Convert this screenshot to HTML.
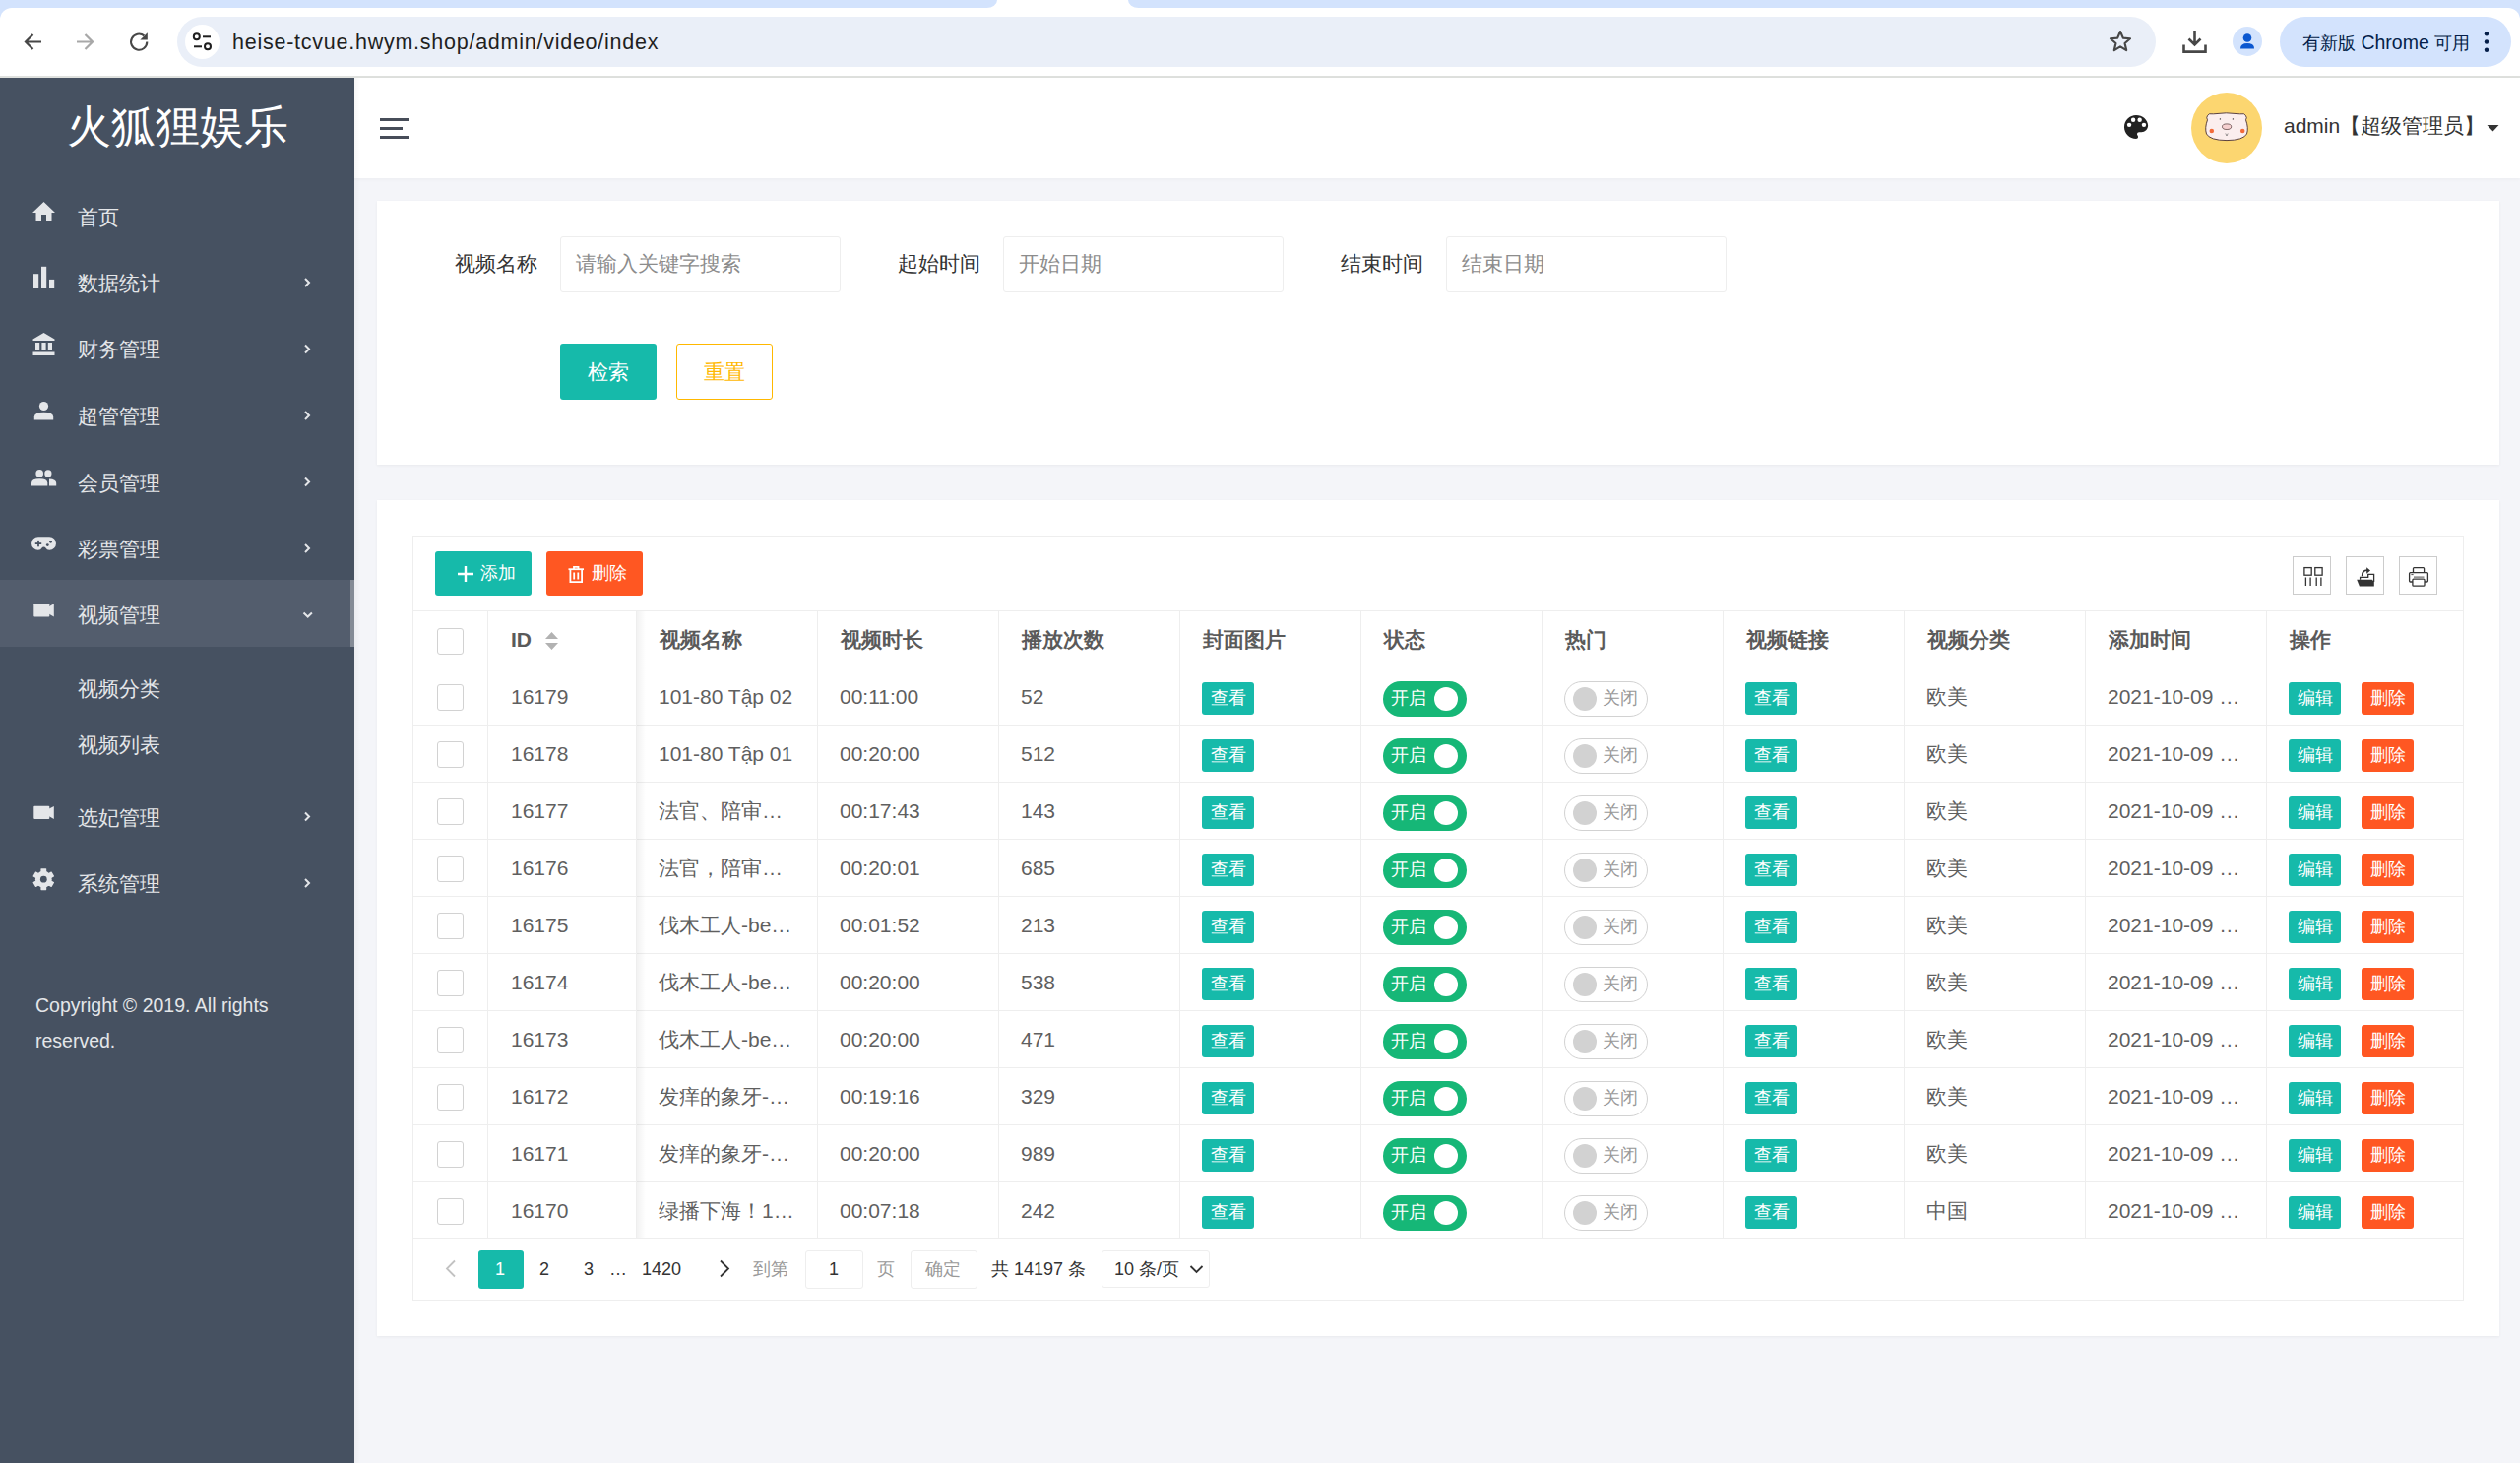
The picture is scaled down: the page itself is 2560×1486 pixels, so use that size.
<!DOCTYPE html>
<html><head><meta charset="utf-8"><title>video</title>
<style>
html,body{margin:0;padding:0;}
body{width:2560px;height:1486px;position:relative;overflow:hidden;background:#f4f5f9;font-family:"Liberation Sans",sans-serif;}
.t{position:absolute;white-space:nowrap;}
svg{position:absolute;overflow:visible;}
</style></head><body>

<div style="position:absolute;left:0px;top:0px;width:2560px;height:8px;background:#ffffff"></div>
<div style="position:absolute;left:0px;top:0px;width:1013px;height:8px;background:#d3e3fd;border-bottom-right-radius:12px 9px"></div>
<div style="position:absolute;left:1146px;top:0px;width:1414px;height:8px;background:#d3e3fd;border-bottom-left-radius:12px 9px"></div>
<div style="position:absolute;left:0px;top:8px;width:14px;height:14px;background:#d3e3fd"></div>
<div style="position:absolute;left:2546px;top:8px;width:14px;height:14px;background:#d3e3fd"></div>
<div style="position:absolute;left:0px;top:8px;width:2560px;height:69px;background:#ffffff;border-top-left-radius:12px;border-top-right-radius:12px"></div>
<div style="position:absolute;left:0px;top:77px;width:2560px;height:2px;background:#dfe1de"></div>
<svg style="left:0;top:0" width="2560" height="79">
<g fill="none" stroke-linecap="butt" stroke-linejoin="miter">
<path d="M42 42.5 H26 M33.5 35 L26 42.5 L33.5 50" stroke="#474747" stroke-width="2.2"/>
<path d="M78 42.5 H94 M86.5 35 L94 42.5 L86.5 50" stroke="#a8a8a8" stroke-width="2.2"/>
<path d="M149.3 42.6 A8.1 8.1 0 1 1 146.4 36.4" stroke="#474747" stroke-width="2.1"/>
<path d="M149.8 33.2 V40.6 H142.4 Z" fill="#474747" stroke="none"/>
</g>
</svg>
<div style="position:absolute;left:180px;top:17px;width:2010px;height:51px;background:#eaeff8;border-radius:26px"></div>
<div style="position:absolute;left:188px;top:25px;width:35px;height:35px;background:#ffffff;border-radius:50%"></div>
<svg style="left:0;top:0" width="300" height="79"><g fill="none" stroke="#1f1f1f" stroke-width="2">
<circle cx="199.8" cy="37.3" r="3"/><path d="M206 37.3 H214"/>
<path d="M197 47.3 H205"/><circle cx="211" cy="47.3" r="3"/></g></svg>
<div class="t" style="left:236px;top:30px;font-size:21.5px;line-height:26px;color:#1f1f1f;letter-spacing:0.75px">heise-tcvue.hwym.shop/admin/video/index</div>
<svg style="left:2140px;top:29px" width="28" height="26" viewBox="0 0 24 24"><path d="M12 2.8l2.6 6.1 6.6.6-5 4.4 1.5 6.5L12 17l-5.7 3.4 1.5-6.5-5-4.4 6.6-.6z" fill="none" stroke="#474747" stroke-width="2" stroke-linejoin="round"/></svg>
<svg style="left:2217px;top:30px" width="25" height="25" viewBox="0 0 25 25"><g fill="none" stroke="#474747" stroke-width="2.6"><path d="M12.5 1 V15 M6.5 9.5 L12.5 15.5 L18.5 9.5"/><path d="M1.5 15.5 V22.6 H23.5 V15.5"/></g></svg>
<div style="position:absolute;left:2268px;top:27px;width:30px;height:30px;background:#d3e3fd;border-radius:50%"></div>
<svg style="left:2268px;top:27px" width="30" height="30"><circle cx="15" cy="11.5" r="4.3" fill="#0b57d0"/><path d="M8 22.5 Q8 17 15 17 Q22 17 22 22.5 Z" fill="#0b57d0"/></svg>
<div style="position:absolute;left:2316px;top:17px;width:235px;height:51px;background:#d3e3fd;border-radius:26px"></div>
<div class="t" style="left:2339px;top:31px;font-size:19.5px;line-height:24px;color:#041e49;"><span style="font-size:18px">有新版</span> Chrome <span style="font-size:18px">可用</span></div>
<svg style="left:2520px;top:28px" width="12" height="28"><circle cx="6" cy="6.3" r="2.2" fill="#041e49"/><circle cx="6" cy="14.5" r="2.2" fill="#041e49"/><circle cx="6" cy="22.8" r="2.2" fill="#041e49"/></svg>
<div style="position:absolute;left:0px;top:79px;width:360px;height:1407px;background:#465161"></div>
<div class="t" style="left:0px;top:103px;font-size:45px;line-height:52px;color:#ffffff;"><div style="width:360px;text-align:center">火狐狸娱乐</div></div>
<div class="t" style="left:79px;top:208px;font-size:21px;line-height:26px;color:#e4e6e9;">首页</div>
<div class="t" style="left:79px;top:275px;font-size:21px;line-height:26px;color:#e4e6e9;">数据统计</div>
<svg style="left:0;top:0" width="360" height="1486"><path d="M310 283.0 L314 287.0 L310 291.0" fill="none" stroke="#e4e6e9" stroke-width="2"/></svg>
<div class="t" style="left:79px;top:342px;font-size:21px;line-height:26px;color:#e4e6e9;">财务管理</div>
<svg style="left:0;top:0" width="360" height="1486"><path d="M310 350.5 L314 354.5 L310 358.5" fill="none" stroke="#e4e6e9" stroke-width="2"/></svg>
<div class="t" style="left:79px;top:410px;font-size:21px;line-height:26px;color:#e4e6e9;">超管管理</div>
<svg style="left:0;top:0" width="360" height="1486"><path d="M310 418.0 L314 422.0 L310 426.0" fill="none" stroke="#e4e6e9" stroke-width="2"/></svg>
<div class="t" style="left:79px;top:478px;font-size:21px;line-height:26px;color:#e4e6e9;">会员管理</div>
<svg style="left:0;top:0" width="360" height="1486"><path d="M310 485.5 L314 489.5 L310 493.5" fill="none" stroke="#e4e6e9" stroke-width="2"/></svg>
<div class="t" style="left:79px;top:545px;font-size:21px;line-height:26px;color:#e4e6e9;">彩票管理</div>
<svg style="left:0;top:0" width="360" height="1486"><path d="M310 553.0 L314 557.0 L310 561.0" fill="none" stroke="#e4e6e9" stroke-width="2"/></svg>
<div style="position:absolute;left:0px;top:589px;width:360px;height:68px;background:#535d6d"></div>
<div style="position:absolute;left:356px;top:589px;width:4px;height:68px;background:#848b96"></div>
<div class="t" style="left:79px;top:612px;font-size:21px;line-height:26px;color:#e4e6e9;">视频管理</div>
<svg style="left:0;top:0" width="360" height="1486"><path d="M308.5 622.5 L312.7 626.5 L316.9 622.5" fill="none" stroke="#e4e6e9" stroke-width="2"/></svg>
<svg style="left:0;top:0" width="360" height="1486"><g fill="#e4e6e9"><path d="M44.5 205 L33 216 H36.5 V224 H42 V218 H47 V224 H52.5 V216 H56 Z"/><rect x="34" y="278.2" width="5.2" height="14.8"/><rect x="42" y="270.8" width="5.2" height="22.2"/><rect x="50" y="283.9" width="5.2" height="9.1"/><path d="M44.5 338 L33.5 344.5 V346 H55.5 V344.5 Z"/><rect x="36" y="348" width="4.2" height="8"/><rect x="42.4" y="348" width="4.2" height="8"/><rect x="48.8" y="348" width="4.2" height="8"/><rect x="33.5" y="357.5" width="22" height="3.5"/><circle cx="44.5" cy="412.5" r="4.6"/><path d="M34.8 426.5 V423.5 Q34.8 418.8 44.5 418.8 Q54.2 418.8 54.2 423.5 V426.5 Z"/><circle cx="40.2" cy="480.9" r="3.8"/><circle cx="48.9" cy="480.9" r="3.6"/><path d="M32 493.5 V490.6 Q32 486.3 40.2 486.3 Q48.3 486.3 48.3 490.6 V493.5 Z"/><path d="M50 493.5 V486.5 Q57.2 486.7 57.2 490.8 V493.5 Z"/><path d="M38.8 545.2 H50.2 A6.8 6.8 0 0 1 50.2 558.8 Q47.6 558.8 46.4 556.6 Q45.8 555.6 44.5 555.6 Q43.2 555.6 42.6 556.6 Q41.4 558.8 38.8 558.8 A6.8 6.8 0 0 1 38.8 545.2 Z"/><rect x="34.3" y="613.2" width="16" height="13.4" rx="1"/><path d="M50 616 L54.8 613.3 V626.5 L50 623.8 Z"/></g><g fill="#465161"><circle cx="39.5" cy="551.5" r="2.6" fill="none"/></g></svg>
<svg style="left:0;top:0" width="360" height="1486"><g fill="#465161">
<rect x="35.8" y="551.2" width="6.4" height="1.8"/><rect x="38.1" y="548.9" width="1.8" height="6.4"/>
<circle cx="51.6" cy="550.3" r="1.4"/><circle cx="48.3" cy="553.6" r="1.4"/></g></svg>
<div class="t" style="left:79px;top:687px;font-size:21px;line-height:26px;color:#e4e6e9;">视频分类</div>
<div class="t" style="left:79px;top:744px;font-size:21px;line-height:26px;color:#e4e6e9;">视频列表</div>
<div class="t" style="left:79px;top:818px;font-size:21px;line-height:26px;color:#e4e6e9;">选妃管理</div>
<svg style="left:0;top:0" width="360" height="1486"><path d="M310 825.5 L314 829.5 L310 833.5" fill="none" stroke="#e4e6e9" stroke-width="2"/></svg>
<div class="t" style="left:79px;top:885px;font-size:21px;line-height:26px;color:#e4e6e9;">系统管理</div>
<svg style="left:0;top:0" width="360" height="1486"><path d="M310 893.0 L314 897.0 L310 901.0" fill="none" stroke="#e4e6e9" stroke-width="2"/></svg>
<svg style="left:0;top:0" width="360" height="1486"><g fill="#e4e6e9">
<rect x="34.3" y="818.7" width="16" height="13.4" rx="1"/><path d="M50 821.5 L54.8 818.9 V831.9 L50 829.3 Z"/>
</g>
<g transform="translate(44.3 893.2)" fill="#e4e6e9"><circle cx="0" cy="0" r="8.4"/>
<rect x="-2.9" y="-11" width="5.8" height="22" rx="0.6"/><rect x="-2.9" y="-11" width="5.8" height="22" rx="0.6" transform="rotate(60)"/><rect x="-2.9" y="-11" width="5.8" height="22" rx="0.6" transform="rotate(120)"/>
<circle cx="0" cy="0" r="3.4" fill="#465161"/></g>
</svg>
<div class="t" style="left:36px;top:1003px;font-size:19.5px;line-height:36px;color:#e4e6e9;">Copyright © 2019. All rights<br>reserved.</div>
<div style="position:absolute;left:360px;top:79px;width:2200px;height:102px;background:#ffffff;box-shadow:0 1px 4px rgba(0,0,0,0.04)"></div>
<div style="position:absolute;left:386px;top:120px;width:30px;height:3px;background:#474d59"></div>
<div style="position:absolute;left:386px;top:129px;width:23px;height:3px;background:#474d59"></div>
<div style="position:absolute;left:386px;top:138px;width:30px;height:3px;background:#474d59"></div>
<svg style="left:2158px;top:117px" width="24" height="24" viewBox="2.5 2.5 19 19"><path fill="#222" d="M12 2.5C6.8 2.5 2.5 6.8 2.5 12s4.3 9.5 9.5 9.5c.9 0 1.6-.7 1.6-1.6 0-.4-.2-.8-.4-1.1-.3-.3-.4-.7-.4-1.1 0-.9.7-1.6 1.6-1.6h1.9c2.9 0 5.3-2.4 5.3-5.3C21.5 6.3 17.2 2.5 12 2.5z"/><g fill="#fff"><circle cx="9.7" cy="6.2" r="1.75"/><circle cx="14.9" cy="6.2" r="1.75"/><circle cx="6.5" cy="10.3" r="1.75"/><circle cx="18.3" cy="10.3" r="1.75"/></g></svg>
<div style="position:absolute;left:2226px;top:94px;width:72px;height:72px;background:#fcd670;border-radius:50%"></div>
<svg style="left:2226px;top:94px" width="72" height="72"><path d="M16.5 23.5 Q17.5 20.8 22.5 21.8 Q35 19.8 49.5 21.8 Q54.5 20.8 55.5 23.5 Q57 25.8 55.5 27.8 Q58.5 36 56.5 42 Q53 48.5 36 48.6 Q19 48.5 15.5 42 Q13.5 36 16.5 27.8 Q15 25.8 16.5 23.5 Z" fill="#fbeeee" stroke="#4a3030" stroke-width="0.9"/>
<ellipse cx="36.1" cy="34.7" rx="4.6" ry="2.8" fill="#f6d0d0" stroke="#4a3030" stroke-width="0.7"/>
<circle cx="20.8" cy="39" r="2.3" fill="#f26b3a"/><circle cx="52.2" cy="39" r="2.3" fill="#f26b3a"/>
<circle cx="29.4" cy="26.9" r="0.7" fill="#333"/><circle cx="42.4" cy="26.9" r="0.7" fill="#333"/>
<path d="M34.8 41.5 L36 44 L37.2 41.5" fill="none" stroke="#555" stroke-width="0.6"/></svg>
<div class="t" style="left:2320px;top:115px;font-size:21px;line-height:26px;color:#333333;">admin【超级管理员】</div>
<svg style="left:2526px;top:126px" width="14" height="8"><path d="M0.5 1 H12.5 L6.5 7.5 Z" fill="#333"/></svg>
<div style="position:absolute;left:360px;top:79px;width:6px;height:1407px;background:linear-gradient(to right, rgba(0,0,0,0.035), rgba(0,0,0,0))"></div>
<div style="position:absolute;left:383px;top:204px;width:2156px;height:268px;background:#ffffff;box-shadow:0 1px 3px rgba(0,0,0,0.05)"></div>
<div class="t" style="left:462px;top:255px;font-size:21px;line-height:26px;color:#333333;">视频名称</div>
<div style="position:absolute;left:569px;top:240px;width:283px;height:55px;background:#fff;border:1px solid #eeeeee;border-radius:3px"></div>
<div class="t" style="left:585px;top:255px;font-size:21px;line-height:26px;color:#8c8c8c;">请输入关键字搜索</div>
<div class="t" style="left:912px;top:255px;font-size:21px;line-height:26px;color:#333333;">起始时间</div>
<div style="position:absolute;left:1019px;top:240px;width:283px;height:55px;background:#fff;border:1px solid #eeeeee;border-radius:3px"></div>
<div class="t" style="left:1035px;top:255px;font-size:21px;line-height:26px;color:#8c8c8c;">开始日期</div>
<div class="t" style="left:1362px;top:255px;font-size:21px;line-height:26px;color:#333333;">结束时间</div>
<div style="position:absolute;left:1469px;top:240px;width:283px;height:55px;background:#fff;border:1px solid #eeeeee;border-radius:3px"></div>
<div class="t" style="left:1485px;top:255px;font-size:21px;line-height:26px;color:#8c8c8c;">结束日期</div>
<div style="position:absolute;left:569px;top:349px;width:98px;height:57px;background:#16baaa;border-radius:3px"></div>
<div class="t" style="left:597px;top:365px;font-size:21px;line-height:26px;color:#ffffff;">检索</div>
<div style="position:absolute;left:687px;top:349px;width:96px;height:55px;background:#fff;border:1px solid #ffb800;border-radius:3px"></div>
<div class="t" style="left:715px;top:365px;font-size:21px;line-height:26px;color:#ffb800;">重置</div>
<div style="position:absolute;left:383px;top:508px;width:2156px;height:849px;background:#ffffff;box-shadow:0 1px 3px rgba(0,0,0,0.05)"></div>
<div style="position:absolute;left:419px;top:544px;width:1px;height:777px;background:#eeeeee"></div>
<div style="position:absolute;left:2502px;top:544px;width:1px;height:777px;background:#eeeeee"></div>
<div style="position:absolute;left:419px;top:544px;width:2084px;height:1px;background:#eeeeee"></div>
<div style="position:absolute;left:419px;top:620px;width:2084px;height:1px;background:#eeeeee"></div>
<div style="position:absolute;left:419px;top:1320px;width:2084px;height:1px;background:#eeeeee"></div>
<div style="position:absolute;left:442px;top:560px;width:98px;height:45px;background:#16baaa;border-radius:3px"></div>
<svg style="left:464px;top:574px" width="18" height="18"><path d="M9 1 V17 M1 9 H17" stroke="#fff" stroke-width="2.4"/></svg>
<div class="t" style="left:488px;top:570px;font-size:18px;line-height:24px;color:#ffffff;">添加</div>
<div style="position:absolute;left:555px;top:560px;width:98px;height:45px;background:#ff5722;border-radius:3px"></div>
<svg style="left:576px;top:574px" width="20" height="19"><g fill="none" stroke="#fff" stroke-width="1.8"><path d="M1.5 4.2 H17"/><path d="M7 4 V1.8 H11.5 V4"/><path d="M3.4 4.6 V17.2 H15.1 V4.6"/><path d="M7.2 7.5 V14.5 M11.3 7.5 V14.5"/></g></svg>
<div class="t" style="left:601px;top:570px;font-size:18px;line-height:24px;color:#ffffff;">删除</div>
<div style="position:absolute;left:2329px;top:565px;width:37px;height:37px;background:#fff;border:1px solid #cccccc"></div>
<div style="position:absolute;left:2383px;top:565px;width:37px;height:37px;background:#fff;border:1px solid #cccccc"></div>
<div style="position:absolute;left:2437px;top:565px;width:37px;height:37px;background:#fff;border:1px solid #cccccc"></div>
<svg style="left:2329px;top:565px" width="39" height="39"><g fill="none" stroke="#333" stroke-width="1.3">
<rect x="11.9" y="11.6" width="7.3" height="7.6"/><rect x="22.8" y="11.6" width="7.3" height="7.6"/>
<path d="M13.4 21.6 V30 M18.1 21.6 V30 M24.2 21.6 V30 M28.9 21.6 V30"/></g></svg>
<svg style="left:2383px;top:565px" width="39" height="39">
<path d="M11.2 23.8 H26.8 L28.8 26 V30.4 H13.9 Z" fill="#333"/>
<path d="M14.6 23.8 V21.3 H22.7 V18.3 H28.6 V26" fill="none" stroke="#333" stroke-width="1.3"/>
<path d="M16.6 20.2 Q16.6 14.2 22 14.2" fill="none" stroke="#333" stroke-width="1.7"/>
<path d="M21.2 11.2 L25 14.5 L21.2 17.8 Z" fill="#333"/></svg>
<svg style="left:2437px;top:565px" width="39" height="39"><g fill="none" stroke="#333" stroke-width="1.3">
<path d="M14.5 16.3 V12.5 Q14.5 11.6 15.4 11.6 H24.7 Q25.6 11.6 25.6 12.5 V16.3"/>
<path d="M13.9 26 H11.6 Q10.6 26 10.6 25 V17.6 Q10.6 16.6 11.6 16.6 H28.4 Q29.4 16.6 29.4 17.6 V25 Q29.4 26 28.4 26 H26"/>
<rect x="13.9" y="23.1" width="12.1" height="7.1" rx="1"/>
<path d="M15 21.1 H25.5" stroke-width="0.9"/><path d="M12.4 18.6 H14.6" stroke-width="0.9"/></g></svg>
<div style="position:absolute;left:419px;top:678px;width:2084px;height:1px;background:#eeeeee"></div>
<div style="position:absolute;left:419px;top:736px;width:2084px;height:1px;background:#eeeeee"></div>
<div style="position:absolute;left:419px;top:794px;width:2084px;height:1px;background:#eeeeee"></div>
<div style="position:absolute;left:419px;top:852px;width:2084px;height:1px;background:#eeeeee"></div>
<div style="position:absolute;left:419px;top:910px;width:2084px;height:1px;background:#eeeeee"></div>
<div style="position:absolute;left:419px;top:968px;width:2084px;height:1px;background:#eeeeee"></div>
<div style="position:absolute;left:419px;top:1026px;width:2084px;height:1px;background:#eeeeee"></div>
<div style="position:absolute;left:419px;top:1084px;width:2084px;height:1px;background:#eeeeee"></div>
<div style="position:absolute;left:419px;top:1142px;width:2084px;height:1px;background:#eeeeee"></div>
<div style="position:absolute;left:419px;top:1200px;width:2084px;height:1px;background:#eeeeee"></div>
<div style="position:absolute;left:419px;top:1257px;width:2084px;height:1px;background:#eeeeee"></div>
<div style="position:absolute;left:495px;top:621px;width:1px;height:636px;background:#eeeeee"></div>
<div style="position:absolute;left:646px;top:621px;width:1px;height:636px;background:#eeeeee"></div>
<div style="position:absolute;left:830px;top:621px;width:1px;height:636px;background:#eeeeee"></div>
<div style="position:absolute;left:1014px;top:621px;width:1px;height:636px;background:#eeeeee"></div>
<div style="position:absolute;left:1198px;top:621px;width:1px;height:636px;background:#eeeeee"></div>
<div style="position:absolute;left:1382px;top:621px;width:1px;height:636px;background:#eeeeee"></div>
<div style="position:absolute;left:1566px;top:621px;width:1px;height:636px;background:#eeeeee"></div>
<div style="position:absolute;left:1750px;top:621px;width:1px;height:636px;background:#eeeeee"></div>
<div style="position:absolute;left:1934px;top:621px;width:1px;height:636px;background:#eeeeee"></div>
<div style="position:absolute;left:2118px;top:621px;width:1px;height:636px;background:#eeeeee"></div>
<div style="position:absolute;left:2302px;top:621px;width:1px;height:636px;background:#eeeeee"></div>
<div style="position:absolute;left:647px;top:621px;width:9px;height:636px;background:linear-gradient(to right, rgba(0,0,0,0.05), rgba(0,0,0,0))"></div>
<div class="t" style="left:519px;top:637px;font-size:21px;line-height:26px;color:#5a5a5a;font-weight:bold">ID</div>
<div class="t" style="left:670px;top:637px;font-size:21px;line-height:26px;color:#5a5a5a;font-weight:bold">视频名称</div>
<div class="t" style="left:854px;top:637px;font-size:21px;line-height:26px;color:#5a5a5a;font-weight:bold">视频时长</div>
<div class="t" style="left:1038px;top:637px;font-size:21px;line-height:26px;color:#5a5a5a;font-weight:bold">播放次数</div>
<div class="t" style="left:1222px;top:637px;font-size:21px;line-height:26px;color:#5a5a5a;font-weight:bold">封面图片</div>
<div class="t" style="left:1406px;top:637px;font-size:21px;line-height:26px;color:#5a5a5a;font-weight:bold">状态</div>
<div class="t" style="left:1590px;top:637px;font-size:21px;line-height:26px;color:#5a5a5a;font-weight:bold">热门</div>
<div class="t" style="left:1774px;top:637px;font-size:21px;line-height:26px;color:#5a5a5a;font-weight:bold">视频链接</div>
<div class="t" style="left:1958px;top:637px;font-size:21px;line-height:26px;color:#5a5a5a;font-weight:bold">视频分类</div>
<div class="t" style="left:2142px;top:637px;font-size:21px;line-height:26px;color:#5a5a5a;font-weight:bold">添加时间</div>
<div class="t" style="left:2326px;top:637px;font-size:21px;line-height:26px;color:#5a5a5a;font-weight:bold">操作</div>
<svg style="left:553px;top:641px" width="16" height="20"><path d="M1 8 L7.5 1 L14 8 Z M1 12 L7.5 19 L14 12 Z" fill="#b2b2b2"/></svg>
<div style="position:absolute;left:444px;top:638px;width:25px;height:25px;background:#fff;border:1px solid #d2d2d2;border-radius:3px"></div>
<div style="position:absolute;left:444px;top:695px;width:25px;height:25px;background:#fff;border:1px solid #d2d2d2;border-radius:3px"></div>
<div class="t" style="left:519px;top:695px;font-size:21px;line-height:26px;color:#5f5f5f;">16179</div>
<div class="t" style="left:669px;top:695px;font-size:21px;line-height:26px;color:#5f5f5f;">101-80 Tập 02</div>
<div class="t" style="left:853px;top:695px;font-size:21px;line-height:26px;color:#5f5f5f;">00:11:00</div>
<div class="t" style="left:1037px;top:695px;font-size:21px;line-height:26px;color:#5f5f5f;">52</div>
<div style="position:absolute;left:1221px;top:693px;width:53px;height:33px;background:#16baaa;border-radius:3px"></div><div class="t" style="left:1230px;top:697px;font-size:18px;line-height:24px;color:#ffffff;">查看</div>
<div style="position:absolute;left:1405px;top:692px;width:85px;height:36px;background:#16b777;border-radius:18px"></div>
<div class="t" style="left:1413px;top:697px;font-size:18px;line-height:24px;color:#ffffff;">开启</div>
<div style="position:absolute;left:1457px;top:698px;width:24px;height:24px;background:#fff;border-radius:50%"></div>
<div style="position:absolute;left:1589px;top:692px;width:83px;height:34px;background:#fff;border:1px solid #d2d2d2;border-radius:18px"></div>
<div style="position:absolute;left:1598px;top:698px;width:24px;height:24px;background:#d2d2d2;border-radius:50%"></div>
<div class="t" style="left:1628px;top:697px;font-size:18px;line-height:24px;color:#999999;">关闭</div>
<div style="position:absolute;left:1773px;top:693px;width:53px;height:33px;background:#16baaa;border-radius:3px"></div><div class="t" style="left:1782px;top:697px;font-size:18px;line-height:24px;color:#ffffff;">查看</div>
<div class="t" style="left:1957px;top:695px;font-size:21px;line-height:26px;color:#5f5f5f;">欧美</div>
<div class="t" style="left:2141px;top:695px;font-size:21px;line-height:26px;color:#5f5f5f;">2021-10-09 …</div>
<div style="position:absolute;left:2325px;top:693px;width:53px;height:33px;background:#16baaa;border-radius:3px"></div><div class="t" style="left:2334px;top:697px;font-size:18px;line-height:24px;color:#ffffff;">编辑</div>
<div style="position:absolute;left:2399px;top:693px;width:53px;height:33px;background:#ff5722;border-radius:3px"></div><div class="t" style="left:2408px;top:697px;font-size:18px;line-height:24px;color:#ffffff;">删除</div>
<div style="position:absolute;left:444px;top:753px;width:25px;height:25px;background:#fff;border:1px solid #d2d2d2;border-radius:3px"></div>
<div class="t" style="left:519px;top:753px;font-size:21px;line-height:26px;color:#5f5f5f;">16178</div>
<div class="t" style="left:669px;top:753px;font-size:21px;line-height:26px;color:#5f5f5f;">101-80 Tập 01</div>
<div class="t" style="left:853px;top:753px;font-size:21px;line-height:26px;color:#5f5f5f;">00:20:00</div>
<div class="t" style="left:1037px;top:753px;font-size:21px;line-height:26px;color:#5f5f5f;">512</div>
<div style="position:absolute;left:1221px;top:751px;width:53px;height:33px;background:#16baaa;border-radius:3px"></div><div class="t" style="left:1230px;top:755px;font-size:18px;line-height:24px;color:#ffffff;">查看</div>
<div style="position:absolute;left:1405px;top:750px;width:85px;height:36px;background:#16b777;border-radius:18px"></div>
<div class="t" style="left:1413px;top:755px;font-size:18px;line-height:24px;color:#ffffff;">开启</div>
<div style="position:absolute;left:1457px;top:756px;width:24px;height:24px;background:#fff;border-radius:50%"></div>
<div style="position:absolute;left:1589px;top:750px;width:83px;height:34px;background:#fff;border:1px solid #d2d2d2;border-radius:18px"></div>
<div style="position:absolute;left:1598px;top:756px;width:24px;height:24px;background:#d2d2d2;border-radius:50%"></div>
<div class="t" style="left:1628px;top:755px;font-size:18px;line-height:24px;color:#999999;">关闭</div>
<div style="position:absolute;left:1773px;top:751px;width:53px;height:33px;background:#16baaa;border-radius:3px"></div><div class="t" style="left:1782px;top:755px;font-size:18px;line-height:24px;color:#ffffff;">查看</div>
<div class="t" style="left:1957px;top:753px;font-size:21px;line-height:26px;color:#5f5f5f;">欧美</div>
<div class="t" style="left:2141px;top:753px;font-size:21px;line-height:26px;color:#5f5f5f;">2021-10-09 …</div>
<div style="position:absolute;left:2325px;top:751px;width:53px;height:33px;background:#16baaa;border-radius:3px"></div><div class="t" style="left:2334px;top:755px;font-size:18px;line-height:24px;color:#ffffff;">编辑</div>
<div style="position:absolute;left:2399px;top:751px;width:53px;height:33px;background:#ff5722;border-radius:3px"></div><div class="t" style="left:2408px;top:755px;font-size:18px;line-height:24px;color:#ffffff;">删除</div>
<div style="position:absolute;left:444px;top:811px;width:25px;height:25px;background:#fff;border:1px solid #d2d2d2;border-radius:3px"></div>
<div class="t" style="left:519px;top:811px;font-size:21px;line-height:26px;color:#5f5f5f;">16177</div>
<div class="t" style="left:669px;top:811px;font-size:21px;line-height:26px;color:#5f5f5f;">法官、陪审…</div>
<div class="t" style="left:853px;top:811px;font-size:21px;line-height:26px;color:#5f5f5f;">00:17:43</div>
<div class="t" style="left:1037px;top:811px;font-size:21px;line-height:26px;color:#5f5f5f;">143</div>
<div style="position:absolute;left:1221px;top:809px;width:53px;height:33px;background:#16baaa;border-radius:3px"></div><div class="t" style="left:1230px;top:813px;font-size:18px;line-height:24px;color:#ffffff;">查看</div>
<div style="position:absolute;left:1405px;top:808px;width:85px;height:36px;background:#16b777;border-radius:18px"></div>
<div class="t" style="left:1413px;top:813px;font-size:18px;line-height:24px;color:#ffffff;">开启</div>
<div style="position:absolute;left:1457px;top:814px;width:24px;height:24px;background:#fff;border-radius:50%"></div>
<div style="position:absolute;left:1589px;top:808px;width:83px;height:34px;background:#fff;border:1px solid #d2d2d2;border-radius:18px"></div>
<div style="position:absolute;left:1598px;top:814px;width:24px;height:24px;background:#d2d2d2;border-radius:50%"></div>
<div class="t" style="left:1628px;top:813px;font-size:18px;line-height:24px;color:#999999;">关闭</div>
<div style="position:absolute;left:1773px;top:809px;width:53px;height:33px;background:#16baaa;border-radius:3px"></div><div class="t" style="left:1782px;top:813px;font-size:18px;line-height:24px;color:#ffffff;">查看</div>
<div class="t" style="left:1957px;top:811px;font-size:21px;line-height:26px;color:#5f5f5f;">欧美</div>
<div class="t" style="left:2141px;top:811px;font-size:21px;line-height:26px;color:#5f5f5f;">2021-10-09 …</div>
<div style="position:absolute;left:2325px;top:809px;width:53px;height:33px;background:#16baaa;border-radius:3px"></div><div class="t" style="left:2334px;top:813px;font-size:18px;line-height:24px;color:#ffffff;">编辑</div>
<div style="position:absolute;left:2399px;top:809px;width:53px;height:33px;background:#ff5722;border-radius:3px"></div><div class="t" style="left:2408px;top:813px;font-size:18px;line-height:24px;color:#ffffff;">删除</div>
<div style="position:absolute;left:444px;top:869px;width:25px;height:25px;background:#fff;border:1px solid #d2d2d2;border-radius:3px"></div>
<div class="t" style="left:519px;top:869px;font-size:21px;line-height:26px;color:#5f5f5f;">16176</div>
<div class="t" style="left:669px;top:869px;font-size:21px;line-height:26px;color:#5f5f5f;">法官，陪审…</div>
<div class="t" style="left:853px;top:869px;font-size:21px;line-height:26px;color:#5f5f5f;">00:20:01</div>
<div class="t" style="left:1037px;top:869px;font-size:21px;line-height:26px;color:#5f5f5f;">685</div>
<div style="position:absolute;left:1221px;top:867px;width:53px;height:33px;background:#16baaa;border-radius:3px"></div><div class="t" style="left:1230px;top:871px;font-size:18px;line-height:24px;color:#ffffff;">查看</div>
<div style="position:absolute;left:1405px;top:866px;width:85px;height:36px;background:#16b777;border-radius:18px"></div>
<div class="t" style="left:1413px;top:871px;font-size:18px;line-height:24px;color:#ffffff;">开启</div>
<div style="position:absolute;left:1457px;top:872px;width:24px;height:24px;background:#fff;border-radius:50%"></div>
<div style="position:absolute;left:1589px;top:866px;width:83px;height:34px;background:#fff;border:1px solid #d2d2d2;border-radius:18px"></div>
<div style="position:absolute;left:1598px;top:872px;width:24px;height:24px;background:#d2d2d2;border-radius:50%"></div>
<div class="t" style="left:1628px;top:871px;font-size:18px;line-height:24px;color:#999999;">关闭</div>
<div style="position:absolute;left:1773px;top:867px;width:53px;height:33px;background:#16baaa;border-radius:3px"></div><div class="t" style="left:1782px;top:871px;font-size:18px;line-height:24px;color:#ffffff;">查看</div>
<div class="t" style="left:1957px;top:869px;font-size:21px;line-height:26px;color:#5f5f5f;">欧美</div>
<div class="t" style="left:2141px;top:869px;font-size:21px;line-height:26px;color:#5f5f5f;">2021-10-09 …</div>
<div style="position:absolute;left:2325px;top:867px;width:53px;height:33px;background:#16baaa;border-radius:3px"></div><div class="t" style="left:2334px;top:871px;font-size:18px;line-height:24px;color:#ffffff;">编辑</div>
<div style="position:absolute;left:2399px;top:867px;width:53px;height:33px;background:#ff5722;border-radius:3px"></div><div class="t" style="left:2408px;top:871px;font-size:18px;line-height:24px;color:#ffffff;">删除</div>
<div style="position:absolute;left:444px;top:927px;width:25px;height:25px;background:#fff;border:1px solid #d2d2d2;border-radius:3px"></div>
<div class="t" style="left:519px;top:927px;font-size:21px;line-height:26px;color:#5f5f5f;">16175</div>
<div class="t" style="left:669px;top:927px;font-size:21px;line-height:26px;color:#5f5f5f;">伐木工人-be…</div>
<div class="t" style="left:853px;top:927px;font-size:21px;line-height:26px;color:#5f5f5f;">00:01:52</div>
<div class="t" style="left:1037px;top:927px;font-size:21px;line-height:26px;color:#5f5f5f;">213</div>
<div style="position:absolute;left:1221px;top:925px;width:53px;height:33px;background:#16baaa;border-radius:3px"></div><div class="t" style="left:1230px;top:929px;font-size:18px;line-height:24px;color:#ffffff;">查看</div>
<div style="position:absolute;left:1405px;top:924px;width:85px;height:36px;background:#16b777;border-radius:18px"></div>
<div class="t" style="left:1413px;top:929px;font-size:18px;line-height:24px;color:#ffffff;">开启</div>
<div style="position:absolute;left:1457px;top:930px;width:24px;height:24px;background:#fff;border-radius:50%"></div>
<div style="position:absolute;left:1589px;top:924px;width:83px;height:34px;background:#fff;border:1px solid #d2d2d2;border-radius:18px"></div>
<div style="position:absolute;left:1598px;top:930px;width:24px;height:24px;background:#d2d2d2;border-radius:50%"></div>
<div class="t" style="left:1628px;top:929px;font-size:18px;line-height:24px;color:#999999;">关闭</div>
<div style="position:absolute;left:1773px;top:925px;width:53px;height:33px;background:#16baaa;border-radius:3px"></div><div class="t" style="left:1782px;top:929px;font-size:18px;line-height:24px;color:#ffffff;">查看</div>
<div class="t" style="left:1957px;top:927px;font-size:21px;line-height:26px;color:#5f5f5f;">欧美</div>
<div class="t" style="left:2141px;top:927px;font-size:21px;line-height:26px;color:#5f5f5f;">2021-10-09 …</div>
<div style="position:absolute;left:2325px;top:925px;width:53px;height:33px;background:#16baaa;border-radius:3px"></div><div class="t" style="left:2334px;top:929px;font-size:18px;line-height:24px;color:#ffffff;">编辑</div>
<div style="position:absolute;left:2399px;top:925px;width:53px;height:33px;background:#ff5722;border-radius:3px"></div><div class="t" style="left:2408px;top:929px;font-size:18px;line-height:24px;color:#ffffff;">删除</div>
<div style="position:absolute;left:444px;top:985px;width:25px;height:25px;background:#fff;border:1px solid #d2d2d2;border-radius:3px"></div>
<div class="t" style="left:519px;top:985px;font-size:21px;line-height:26px;color:#5f5f5f;">16174</div>
<div class="t" style="left:669px;top:985px;font-size:21px;line-height:26px;color:#5f5f5f;">伐木工人-be…</div>
<div class="t" style="left:853px;top:985px;font-size:21px;line-height:26px;color:#5f5f5f;">00:20:00</div>
<div class="t" style="left:1037px;top:985px;font-size:21px;line-height:26px;color:#5f5f5f;">538</div>
<div style="position:absolute;left:1221px;top:983px;width:53px;height:33px;background:#16baaa;border-radius:3px"></div><div class="t" style="left:1230px;top:987px;font-size:18px;line-height:24px;color:#ffffff;">查看</div>
<div style="position:absolute;left:1405px;top:982px;width:85px;height:36px;background:#16b777;border-radius:18px"></div>
<div class="t" style="left:1413px;top:987px;font-size:18px;line-height:24px;color:#ffffff;">开启</div>
<div style="position:absolute;left:1457px;top:988px;width:24px;height:24px;background:#fff;border-radius:50%"></div>
<div style="position:absolute;left:1589px;top:982px;width:83px;height:34px;background:#fff;border:1px solid #d2d2d2;border-radius:18px"></div>
<div style="position:absolute;left:1598px;top:988px;width:24px;height:24px;background:#d2d2d2;border-radius:50%"></div>
<div class="t" style="left:1628px;top:987px;font-size:18px;line-height:24px;color:#999999;">关闭</div>
<div style="position:absolute;left:1773px;top:983px;width:53px;height:33px;background:#16baaa;border-radius:3px"></div><div class="t" style="left:1782px;top:987px;font-size:18px;line-height:24px;color:#ffffff;">查看</div>
<div class="t" style="left:1957px;top:985px;font-size:21px;line-height:26px;color:#5f5f5f;">欧美</div>
<div class="t" style="left:2141px;top:985px;font-size:21px;line-height:26px;color:#5f5f5f;">2021-10-09 …</div>
<div style="position:absolute;left:2325px;top:983px;width:53px;height:33px;background:#16baaa;border-radius:3px"></div><div class="t" style="left:2334px;top:987px;font-size:18px;line-height:24px;color:#ffffff;">编辑</div>
<div style="position:absolute;left:2399px;top:983px;width:53px;height:33px;background:#ff5722;border-radius:3px"></div><div class="t" style="left:2408px;top:987px;font-size:18px;line-height:24px;color:#ffffff;">删除</div>
<div style="position:absolute;left:444px;top:1043px;width:25px;height:25px;background:#fff;border:1px solid #d2d2d2;border-radius:3px"></div>
<div class="t" style="left:519px;top:1043px;font-size:21px;line-height:26px;color:#5f5f5f;">16173</div>
<div class="t" style="left:669px;top:1043px;font-size:21px;line-height:26px;color:#5f5f5f;">伐木工人-be…</div>
<div class="t" style="left:853px;top:1043px;font-size:21px;line-height:26px;color:#5f5f5f;">00:20:00</div>
<div class="t" style="left:1037px;top:1043px;font-size:21px;line-height:26px;color:#5f5f5f;">471</div>
<div style="position:absolute;left:1221px;top:1041px;width:53px;height:33px;background:#16baaa;border-radius:3px"></div><div class="t" style="left:1230px;top:1045px;font-size:18px;line-height:24px;color:#ffffff;">查看</div>
<div style="position:absolute;left:1405px;top:1040px;width:85px;height:36px;background:#16b777;border-radius:18px"></div>
<div class="t" style="left:1413px;top:1045px;font-size:18px;line-height:24px;color:#ffffff;">开启</div>
<div style="position:absolute;left:1457px;top:1046px;width:24px;height:24px;background:#fff;border-radius:50%"></div>
<div style="position:absolute;left:1589px;top:1040px;width:83px;height:34px;background:#fff;border:1px solid #d2d2d2;border-radius:18px"></div>
<div style="position:absolute;left:1598px;top:1046px;width:24px;height:24px;background:#d2d2d2;border-radius:50%"></div>
<div class="t" style="left:1628px;top:1045px;font-size:18px;line-height:24px;color:#999999;">关闭</div>
<div style="position:absolute;left:1773px;top:1041px;width:53px;height:33px;background:#16baaa;border-radius:3px"></div><div class="t" style="left:1782px;top:1045px;font-size:18px;line-height:24px;color:#ffffff;">查看</div>
<div class="t" style="left:1957px;top:1043px;font-size:21px;line-height:26px;color:#5f5f5f;">欧美</div>
<div class="t" style="left:2141px;top:1043px;font-size:21px;line-height:26px;color:#5f5f5f;">2021-10-09 …</div>
<div style="position:absolute;left:2325px;top:1041px;width:53px;height:33px;background:#16baaa;border-radius:3px"></div><div class="t" style="left:2334px;top:1045px;font-size:18px;line-height:24px;color:#ffffff;">编辑</div>
<div style="position:absolute;left:2399px;top:1041px;width:53px;height:33px;background:#ff5722;border-radius:3px"></div><div class="t" style="left:2408px;top:1045px;font-size:18px;line-height:24px;color:#ffffff;">删除</div>
<div style="position:absolute;left:444px;top:1101px;width:25px;height:25px;background:#fff;border:1px solid #d2d2d2;border-radius:3px"></div>
<div class="t" style="left:519px;top:1101px;font-size:21px;line-height:26px;color:#5f5f5f;">16172</div>
<div class="t" style="left:669px;top:1101px;font-size:21px;line-height:26px;color:#5f5f5f;">发痒的象牙-…</div>
<div class="t" style="left:853px;top:1101px;font-size:21px;line-height:26px;color:#5f5f5f;">00:19:16</div>
<div class="t" style="left:1037px;top:1101px;font-size:21px;line-height:26px;color:#5f5f5f;">329</div>
<div style="position:absolute;left:1221px;top:1099px;width:53px;height:33px;background:#16baaa;border-radius:3px"></div><div class="t" style="left:1230px;top:1103px;font-size:18px;line-height:24px;color:#ffffff;">查看</div>
<div style="position:absolute;left:1405px;top:1098px;width:85px;height:36px;background:#16b777;border-radius:18px"></div>
<div class="t" style="left:1413px;top:1103px;font-size:18px;line-height:24px;color:#ffffff;">开启</div>
<div style="position:absolute;left:1457px;top:1104px;width:24px;height:24px;background:#fff;border-radius:50%"></div>
<div style="position:absolute;left:1589px;top:1098px;width:83px;height:34px;background:#fff;border:1px solid #d2d2d2;border-radius:18px"></div>
<div style="position:absolute;left:1598px;top:1104px;width:24px;height:24px;background:#d2d2d2;border-radius:50%"></div>
<div class="t" style="left:1628px;top:1103px;font-size:18px;line-height:24px;color:#999999;">关闭</div>
<div style="position:absolute;left:1773px;top:1099px;width:53px;height:33px;background:#16baaa;border-radius:3px"></div><div class="t" style="left:1782px;top:1103px;font-size:18px;line-height:24px;color:#ffffff;">查看</div>
<div class="t" style="left:1957px;top:1101px;font-size:21px;line-height:26px;color:#5f5f5f;">欧美</div>
<div class="t" style="left:2141px;top:1101px;font-size:21px;line-height:26px;color:#5f5f5f;">2021-10-09 …</div>
<div style="position:absolute;left:2325px;top:1099px;width:53px;height:33px;background:#16baaa;border-radius:3px"></div><div class="t" style="left:2334px;top:1103px;font-size:18px;line-height:24px;color:#ffffff;">编辑</div>
<div style="position:absolute;left:2399px;top:1099px;width:53px;height:33px;background:#ff5722;border-radius:3px"></div><div class="t" style="left:2408px;top:1103px;font-size:18px;line-height:24px;color:#ffffff;">删除</div>
<div style="position:absolute;left:444px;top:1159px;width:25px;height:25px;background:#fff;border:1px solid #d2d2d2;border-radius:3px"></div>
<div class="t" style="left:519px;top:1159px;font-size:21px;line-height:26px;color:#5f5f5f;">16171</div>
<div class="t" style="left:669px;top:1159px;font-size:21px;line-height:26px;color:#5f5f5f;">发痒的象牙-…</div>
<div class="t" style="left:853px;top:1159px;font-size:21px;line-height:26px;color:#5f5f5f;">00:20:00</div>
<div class="t" style="left:1037px;top:1159px;font-size:21px;line-height:26px;color:#5f5f5f;">989</div>
<div style="position:absolute;left:1221px;top:1157px;width:53px;height:33px;background:#16baaa;border-radius:3px"></div><div class="t" style="left:1230px;top:1161px;font-size:18px;line-height:24px;color:#ffffff;">查看</div>
<div style="position:absolute;left:1405px;top:1156px;width:85px;height:36px;background:#16b777;border-radius:18px"></div>
<div class="t" style="left:1413px;top:1161px;font-size:18px;line-height:24px;color:#ffffff;">开启</div>
<div style="position:absolute;left:1457px;top:1162px;width:24px;height:24px;background:#fff;border-radius:50%"></div>
<div style="position:absolute;left:1589px;top:1156px;width:83px;height:34px;background:#fff;border:1px solid #d2d2d2;border-radius:18px"></div>
<div style="position:absolute;left:1598px;top:1162px;width:24px;height:24px;background:#d2d2d2;border-radius:50%"></div>
<div class="t" style="left:1628px;top:1161px;font-size:18px;line-height:24px;color:#999999;">关闭</div>
<div style="position:absolute;left:1773px;top:1157px;width:53px;height:33px;background:#16baaa;border-radius:3px"></div><div class="t" style="left:1782px;top:1161px;font-size:18px;line-height:24px;color:#ffffff;">查看</div>
<div class="t" style="left:1957px;top:1159px;font-size:21px;line-height:26px;color:#5f5f5f;">欧美</div>
<div class="t" style="left:2141px;top:1159px;font-size:21px;line-height:26px;color:#5f5f5f;">2021-10-09 …</div>
<div style="position:absolute;left:2325px;top:1157px;width:53px;height:33px;background:#16baaa;border-radius:3px"></div><div class="t" style="left:2334px;top:1161px;font-size:18px;line-height:24px;color:#ffffff;">编辑</div>
<div style="position:absolute;left:2399px;top:1157px;width:53px;height:33px;background:#ff5722;border-radius:3px"></div><div class="t" style="left:2408px;top:1161px;font-size:18px;line-height:24px;color:#ffffff;">删除</div>
<div style="position:absolute;left:444px;top:1217px;width:25px;height:25px;background:#fff;border:1px solid #d2d2d2;border-radius:3px"></div>
<div class="t" style="left:519px;top:1217px;font-size:21px;line-height:26px;color:#5f5f5f;">16170</div>
<div class="t" style="left:669px;top:1217px;font-size:21px;line-height:26px;color:#5f5f5f;">绿播下海！1…</div>
<div class="t" style="left:853px;top:1217px;font-size:21px;line-height:26px;color:#5f5f5f;">00:07:18</div>
<div class="t" style="left:1037px;top:1217px;font-size:21px;line-height:26px;color:#5f5f5f;">242</div>
<div style="position:absolute;left:1221px;top:1215px;width:53px;height:33px;background:#16baaa;border-radius:3px"></div><div class="t" style="left:1230px;top:1219px;font-size:18px;line-height:24px;color:#ffffff;">查看</div>
<div style="position:absolute;left:1405px;top:1214px;width:85px;height:36px;background:#16b777;border-radius:18px"></div>
<div class="t" style="left:1413px;top:1219px;font-size:18px;line-height:24px;color:#ffffff;">开启</div>
<div style="position:absolute;left:1457px;top:1220px;width:24px;height:24px;background:#fff;border-radius:50%"></div>
<div style="position:absolute;left:1589px;top:1214px;width:83px;height:34px;background:#fff;border:1px solid #d2d2d2;border-radius:18px"></div>
<div style="position:absolute;left:1598px;top:1220px;width:24px;height:24px;background:#d2d2d2;border-radius:50%"></div>
<div class="t" style="left:1628px;top:1219px;font-size:18px;line-height:24px;color:#999999;">关闭</div>
<div style="position:absolute;left:1773px;top:1215px;width:53px;height:33px;background:#16baaa;border-radius:3px"></div><div class="t" style="left:1782px;top:1219px;font-size:18px;line-height:24px;color:#ffffff;">查看</div>
<div class="t" style="left:1957px;top:1217px;font-size:21px;line-height:26px;color:#5f5f5f;">中国</div>
<div class="t" style="left:2141px;top:1217px;font-size:21px;line-height:26px;color:#5f5f5f;">2021-10-09 …</div>
<div style="position:absolute;left:2325px;top:1215px;width:53px;height:33px;background:#16baaa;border-radius:3px"></div><div class="t" style="left:2334px;top:1219px;font-size:18px;line-height:24px;color:#ffffff;">编辑</div>
<div style="position:absolute;left:2399px;top:1215px;width:53px;height:33px;background:#ff5722;border-radius:3px"></div><div class="t" style="left:2408px;top:1219px;font-size:18px;line-height:24px;color:#ffffff;">删除</div>
<svg style="left:450px;top:1279px" width="16" height="20"><path d="M12 1.5 L4 9.5 L12 17.5" fill="none" stroke="#c2c2c2" stroke-width="1.8"/></svg>
<div style="position:absolute;left:486px;top:1270px;width:46px;height:39px;background:#16baaa;border-radius:3px"></div>
<div class="t" style="left:503px;top:1277px;font-size:18px;line-height:24px;color:#ffffff;">1</div>
<div class="t" style="left:548px;top:1277px;font-size:18px;line-height:24px;color:#333333;">2</div>
<div class="t" style="left:593px;top:1277px;font-size:18px;line-height:24px;color:#333333;">3</div>
<div class="t" style="left:619px;top:1277px;font-size:18px;line-height:24px;color:#333333;">…</div>
<div class="t" style="left:652px;top:1277px;font-size:18px;line-height:24px;color:#333333;">1420</div>
<svg style="left:728px;top:1279px" width="16" height="20"><path d="M4 1.5 L12 9.5 L4 17.5" fill="none" stroke="#333" stroke-width="1.8"/></svg>
<div class="t" style="left:765px;top:1277px;font-size:18px;line-height:24px;color:#999999;">到第</div>
<div style="position:absolute;left:818px;top:1270px;width:57px;height:37px;background:#fff;border:1px solid #eeeeee;border-radius:3px"></div>
<div class="t" style="left:842px;top:1277px;font-size:18px;line-height:24px;color:#333333;">1</div>
<div class="t" style="left:891px;top:1277px;font-size:18px;line-height:24px;color:#999999;">页</div>
<div style="position:absolute;left:925px;top:1270px;width:66px;height:37px;background:#fff;border:1px solid #eeeeee;border-radius:3px"></div>
<div class="t" style="left:940px;top:1277px;font-size:18px;line-height:24px;color:#999999;">确定</div>
<div class="t" style="left:1007px;top:1277px;font-size:18px;line-height:24px;color:#333333;">共 14197 条</div>
<div style="position:absolute;left:1119px;top:1270px;width:108px;height:36px;background:#fff;border:1px solid #eeeeee;border-radius:3px"></div>
<div class="t" style="left:1132px;top:1277px;font-size:18px;line-height:24px;color:#333333;">10 条/页</div>
<svg style="left:1208px;top:1284px" width="16" height="12"><path d="M1.5 2 L7.5 8 L13.5 2" fill="none" stroke="#333" stroke-width="1.8"/></svg>
</body></html>
